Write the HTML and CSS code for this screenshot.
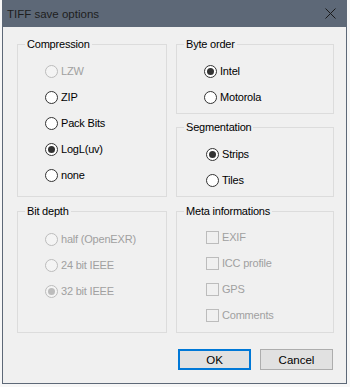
FILE: index.html
```html
<!DOCTYPE html>
<html lang="en">
<head>
  <meta charset="UTF-8" />
  <title>TIFF save options</title>
  <link rel="stylesheet" href="styles.css">
</head>
<body>
  <div class="window">
    <div class="titlebar">
      <span class="title">TIFF save options</span>
      <span class="close">
        <svg width="11" height="11" viewBox="0 0 11 11">
          <path d="M0.5 0.5 L10.5 10.5 M10.5 0.5 L0.5 10.5" stroke="#1a1a1a" stroke-width="1" fill="none" />
        </svg>
      </span>
    </div>

    <div class="content">
      <div class="groups">
        <fieldset class="group compression">
          <legend>Compression</legend>
          <div class="opt disabled"><span class="radio"></span>LZW</div>
          <div class="opt"><span class="radio"></span>ZIP</div>
          <div class="opt"><span class="radio"></span>Pack Bits</div>
          <div class="opt"><span class="radio on"></span>LogL(uv)</div>
          <div class="opt"><span class="radio"></span>none</div>
        </fieldset>

        <div class="stack">
          <fieldset class="group byte-order">
            <legend>Byte order</legend>
            <div class="opt"><span class="radio on"></span>Intel</div>
            <div class="opt"><span class="radio"></span>Motorola</div>
          </fieldset>
          <fieldset class="group segmentation">
            <legend>Segmentation</legend>
            <div class="opt"><span class="radio on"></span>Strips</div>
            <div class="opt"><span class="radio"></span>Tiles</div>
          </fieldset>
        </div>

        <fieldset class="group bit-depth">
          <legend>Bit depth</legend>
          <div class="opt disabled"><span class="radio"></span>half (OpenEXR)</div>
          <div class="opt disabled"><span class="radio"></span>24 bit IEEE</div>
          <div class="opt disabled"><span class="radio on"></span>32 bit IEEE</div>
        </fieldset>

        <fieldset class="group meta">
          <legend>Meta informations</legend>
          <div class="opt disabled"><span class="check"></span>EXIF</div>
          <div class="opt disabled"><span class="check"></span>ICC profile</div>
          <div class="opt disabled"><span class="check"></span>GPS</div>
          <div class="opt disabled"><span class="check"></span>Comments</div>
        </fieldset>
      </div>

      <div class="buttons">
        <button class="btn default">OK</button>
        <button class="btn">Cancel</button>
      </div>
    </div>
  </div>
</body>
</html>
```

FILE: styles.css
```css
body {
  margin: 0;
  background: #f7f7f7;
  font-family: 'Liberation Sans', Arial, sans-serif;
  font-size: 11px;
  letter-spacing: -0.2px;
  color: #000;
}

.window {
  width: 345px;
  height: 384px;
  margin-left: 2px;
  box-sizing: border-box;
  background: #f0f0f0;
  border: 1px solid #5d6877;
  border-top: none;
  display: flex;
  flex-direction: column;
}

.titlebar {
  height: 27px;
  margin: 0 -1px;
  background: #5d6877;
  display: flex;
  align-items: center;
  justify-content: space-between;
  padding: 0 9px 0 5px;
}

.title {
  font-size: 11.5px;
  letter-spacing: 0;
  color: #1e1e1e;
}

.close {
  display: flex;
  margin-right: 2px;
}

.content {
  padding: 10px 12px 0 14px;
}

.groups {
  display: grid;
  grid-template-columns: 150px 158px;
  grid-template-rows: 160px 129px;
  column-gap: 9px;
  row-gap: 7px;
}

.stack {
  display: flex;
  flex-direction: column;
  gap: 6px;
}

.group {
  margin: 0;
  padding: 7px 0 0 0;
  min-width: 0;
  box-sizing: border-box;
  border: 1px solid #dcdcdc;
}

.group legend {
  margin-left: 7px;
  padding: 0 2px;
  line-height: 14px;
}

.byte-order,
.segmentation {
  height: 77px;
}

.compression .opt,
.bit-depth .opt,
.byte-order .opt {
  padding-left: 27px;
}

.segmentation .opt,
.meta .opt {
  padding-left: 29px;
}

.bit-depth {
  padding-top: 8px;
}

.meta {
  padding-top: 6px;
}

.opt {
  height: 26px;
  display: flex;
  align-items: center;
}

.opt.disabled {
  color: #a0a0a0;
}

.radio {
  width: 13px;
  height: 13px;
  box-sizing: border-box;
  border: 1px solid #333;
  border-radius: 50%;
  background: #fff;
  margin-right: 3px;
  display: flex;
  align-items: center;
  justify-content: center;
}

.radio.on::after {
  content: '';
  width: 7px;
  height: 7px;
  border-radius: 50%;
  background: #333;
}

.disabled .radio {
  border-color: #bcbcbc;
  background: #f4f4f4;
}

.disabled .radio.on::after {
  background: #bcbcbc;
}

.check {
  width: 13px;
  height: 13px;
  box-sizing: border-box;
  border: 1px solid #bcbcbc;
  background: #f0f0f0;
  margin-right: 3px;
}

.buttons {
  display: flex;
  justify-content: flex-end;
  gap: 9px;
  margin-top: 16px;
  padding-right: 1px;
}

.btn {
  width: 73px;
  height: 21px;
  padding: 0;
  background: #e1e1e1;
  border: 1px solid #adadad;
  font-family: 'Liberation Sans', Arial, sans-serif;
  font-size: 11.5px;
  color: #000;
}

.btn.default {
  border: 2px solid #0078d7;
}
```
